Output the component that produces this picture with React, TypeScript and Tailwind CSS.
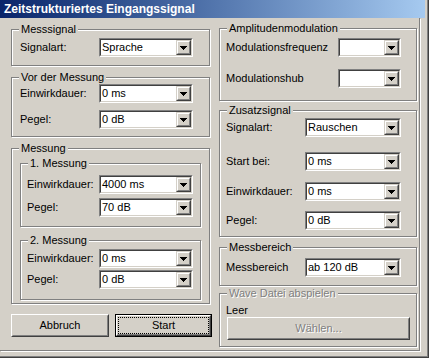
import React from "react";

function Arrow() {
  return (
    <div className="w-[15px] h-full border border-t-[#d4d0c8] border-l-[#d4d0c8] border-b-[#404040] border-r-[#404040] bg-[#d4d0c8]">
      <div className="w-full h-full border border-t-white border-l-white border-b-[#808080] border-r-[#808080] flex items-center justify-center">
        <svg width="7" height="4" viewBox="0 0 7 4" shapeRendering="crispEdges">
          <rect x="0" y="0" width="7" height="1" fill="#000" />
          <rect x="1" y="1" width="5" height="1" fill="#000" />
          <rect x="2" y="2" width="3" height="1" fill="#000" />
          <rect x="3" y="3" width="1" height="1" fill="#000" />
        </svg>
      </div>
    </div>
  );
}

function Select({ value, className }: { value: string; className: string }) {
  return (
    <div
      className={`h-[19px] shrink-0 border border-t-[#808080] border-l-[#808080] border-b-white border-r-white ${className}`}
    >
      <div className="h-full border border-t-[#404040] border-l-[#404040] border-b-[#d4d0c8] border-r-[#d4d0c8] bg-white flex">
        <div className="flex-1 pl-[1px] leading-[15px] whitespace-nowrap overflow-hidden">{value}</div>
        <Arrow />
      </div>
    </div>
  );
}

function Row({
  label,
  value,
  className,
  selClass,
}: {
  label: string;
  value: string;
  className: string;
  selClass: string;
}) {
  return (
    <div className={`flex items-center h-[19px] ${className}`}>
      <span className="flex-1 whitespace-nowrap leading-[13px]">{label}</span>
      <Select value={value} className={selClass} />
    </div>
  );
}

function Group({
  title,
  className,
  children,
  disabled,
}: {
  title: string;
  className: string;
  children: React.ReactNode;
  disabled?: boolean;
}) {
  return (
    <div className={`relative border border-[#808080] shadow-[1px_1px_0_#fff,inset_1px_1px_0_#fff] ${className}`}>
      <span
        className={`absolute left-[7px] top-[-7px] px-[2px] bg-[#d4d0c8] leading-[13px] whitespace-nowrap ${
          disabled ? "text-[#808080] [text-shadow:1px_1px_0_#fff]" : ""
        }`}
      >
        {title}
      </span>
      {children}
    </div>
  );
}

function Button({
  children,
  className,
  isDefault,
  disabled,
}: {
  children: React.ReactNode;
  className: string;
  isDefault?: boolean;
  disabled?: boolean;
}) {
  const inner = (
    <div className="h-full border border-t-white border-l-white border-b-[#404040] border-r-[#404040]">
      <div className="h-full border border-t-[#d4d0c8] border-l-[#d4d0c8] border-b-[#808080] border-r-[#808080] flex items-center justify-center">
        {isDefault ? (
          <div className="w-full h-full border border-dotted border-black flex items-center justify-center">
            {children}
          </div>
        ) : (
          <span className={disabled ? "text-[#808080] [text-shadow:1px_1px_0_#fff]" : ""}>{children}</span>
        )}
      </div>
    </div>
  );
  return (
    <div className={`h-[23px] shrink-0 bg-[#d4d0c8] ${isDefault ? "border border-black" : ""} ${className}`}>
      {inner}
    </div>
  );
}

export default function App() {
  return (
    <div className="w-[429px] h-[358px] bg-[#d4d0c8] border-r border-b border-[#404040] font-['Liberation_Sans',Arial,sans-serif] text-[11px] text-black overflow-hidden">
      <div className="h-full border-r border-b border-[#808080] pr-[2px] pb-[2px] flex flex-col">
        <div className="h-[18px] shrink-0 bg-gradient-to-r from-[#0a246a] to-[#a6caf0] text-white font-bold text-[12px] pl-[4px] leading-[18px] whitespace-nowrap">
          Zeitstrukturiertes Eingangssignal
        </div>
        <div className="w-[420px] h-[333px] border-r border-b border-[#808080] shadow-[1px_1px_0_#fff] flex pl-[11px] gap-[9px]">
          {/* Left column */}
          <div className="w-[199px] shrink-0 flex flex-col">
            <Group title="Messsignal" className="mt-[11px] pt-[8px] pb-[8px]">
              <Row label="Signalart:" value="Sprache" className="pl-[8px]" selClass="w-[94px] mr-[16px]" />
            </Group>
            <Group title="Vor der Messung" className="mt-[11px] pt-[6px] pb-[7px]">
              <Row label="Einwirkdauer:" value="0 ms" className="pl-[8px]" selClass="w-[94px] mr-[16px]" />
              <Row label="Pegel:" value="0 dB" className="pl-[8px] mt-[7px]" selClass="w-[94px] mr-[16px]" />
            </Group>
            <Group title="Messung" className="mt-[11px] pt-[14px] pb-[3px] px-[8px]">
              <Group title="1. Messung" className="pt-[11px] pb-[9px]">
                <Row label="Einwirkdauer:" value="4000 ms" className="pl-[6px]" selClass="w-[94px] mr-[7px]" />
                <Row label="Pegel:" value="70 dB" className="pl-[6px] mt-[4px]" selClass="w-[94px] mr-[7px]" />
              </Group>
              <Group title="2. Messung" className="mt-[13px] pt-[8px] pb-[10px]">
                <Row label="Einwirkdauer:" value="0 ms" className="pl-[6px]" selClass="w-[94px] mr-[7px]" />
                <Row label="Pegel:" value="0 dB" className="pl-[6px] mt-[2px]" selClass="w-[94px] mr-[7px]" />
              </Group>
            </Group>
            <div className="mt-[10px] flex gap-[6px]">
              <Button className="w-[98px]">Abbruch</Button>
              <Button className="w-[97px]" isDefault>
                Start
              </Button>
            </div>
          </div>
          {/* Right column */}
          <div className="w-[198px] shrink-0 flex flex-col">
            <Group title="Amplitudenmodulation" className="mt-[10px] pt-[9px] pb-[12px]">
              <Row label="Modulationsfrequenz" value="" className="pl-[6px]" selClass="w-[63px] mr-[15px]" />
              <Row label="Modulationshub" value="" className="pl-[6px] mt-[12px]" selClass="w-[63px] mr-[15px]" />
            </Group>
            <Group title="Zusatzsignal" className="mt-[9px] pt-[7px] pb-[6px]">
              <Row label="Signalart:" value="Rauschen" className="pl-[6px]" selClass="w-[96px] mr-[15px]" />
              <Row label="Start bei:" value="0 ms" className="pl-[6px] mt-[15px]" selClass="w-[96px] mr-[15px]" />
              <Row label="Einwirkdauer:" value="0 ms" className="pl-[6px] mt-[11px]" selClass="w-[96px] mr-[15px]" />
              <Row label="Pegel:" value="0 dB" className="pl-[6px] mt-[10px]" selClass="w-[96px] mr-[15px]" />
            </Group>
            <Group title="Messbereich" className="mt-[10px] pt-[10px] pb-[8px]">
              <Row label="Messbereich" value="ab 120 dB" className="pl-[6px]" selClass="w-[96px] mr-[15px]" />
            </Group>
            <Group title="Wave Datei abspielen" className="mt-[7px] pt-[10px] pb-[6px]" disabled>
              <div className="h-[13px] leading-[13px] pl-[6px]">Leer</div>
              <div className="ml-[7px] mr-[6px]">
                <Button className="w-full" disabled>
                  Wählen...
                </Button>
              </div>
            </Group>
          </div>
        </div>
      </div>
    </div>
  );
}
